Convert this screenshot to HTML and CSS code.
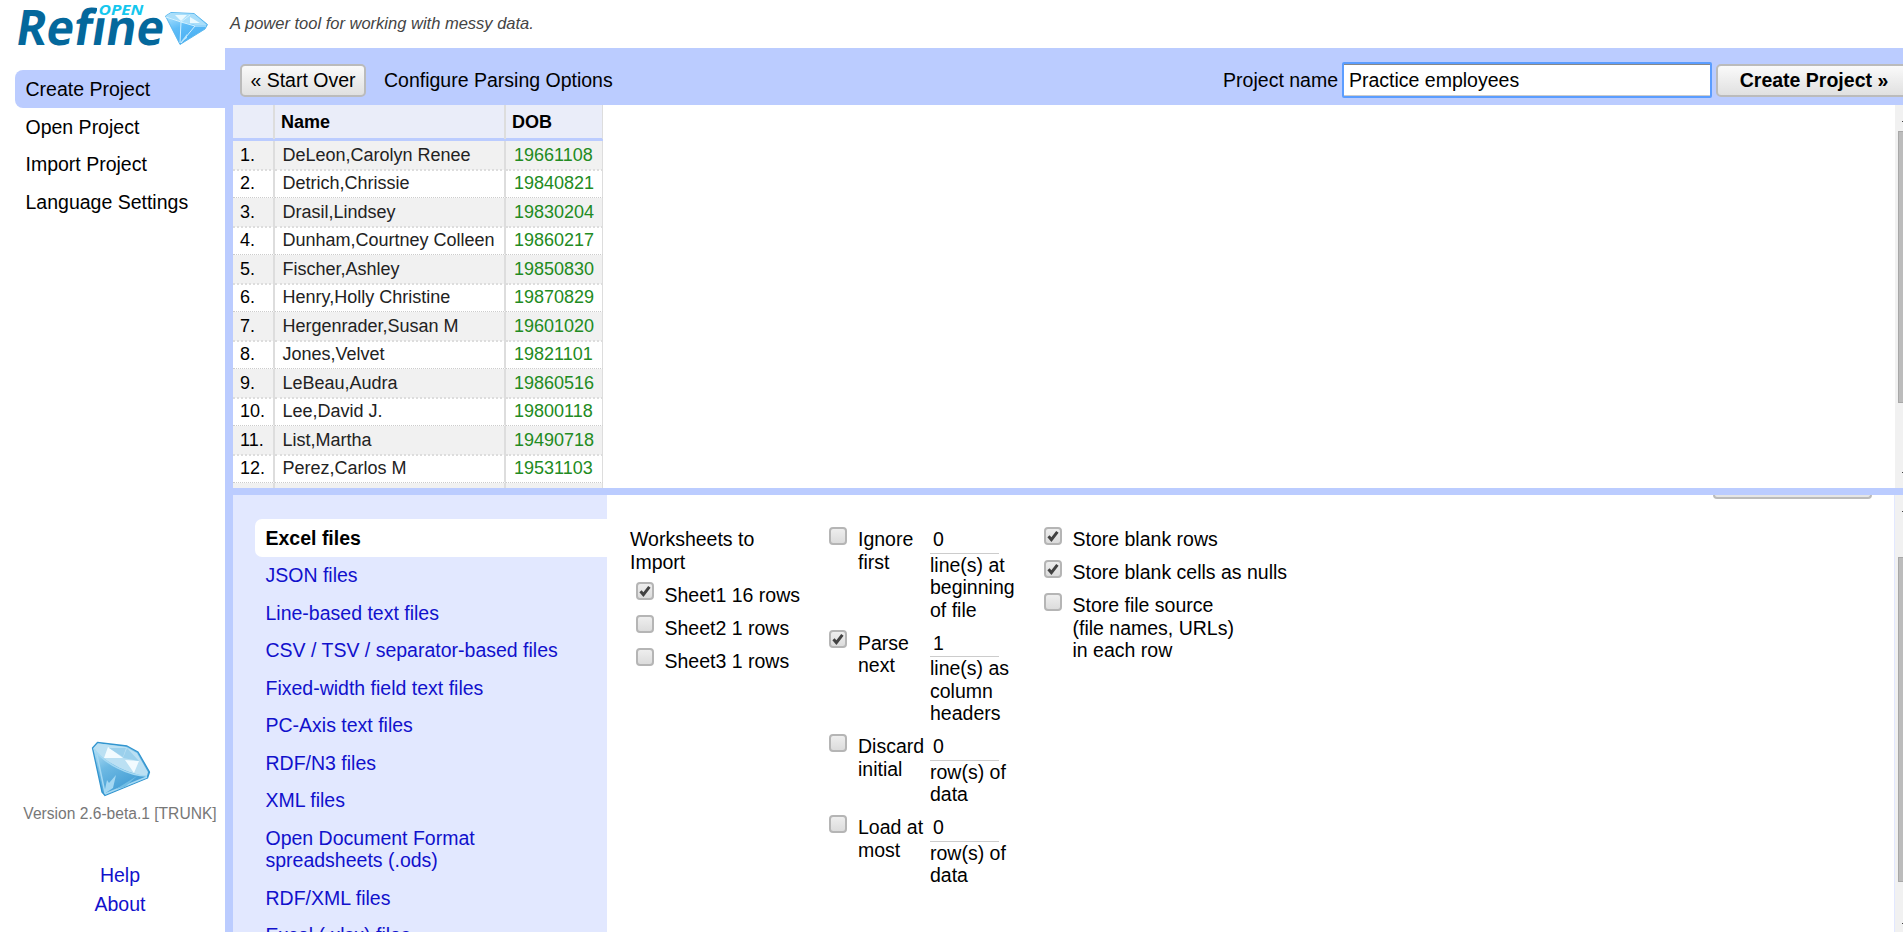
FILE: index.html
```html
<!DOCTYPE html>
<html lang="en">
<head>
<meta charset="utf-8">
<title>OpenRefine</title>
<link rel="stylesheet" href="styles.css">
</head>
<body>
<svg class="defs" width="0" height="0" aria-hidden="true">
  <defs>
    <linearGradient id="gem" x1="0" y1="0" x2="0.6" y2="1">
      <stop offset="0" stop-color="#c9ebfb"/><stop offset="0.45" stop-color="#6db9e3"/><stop offset="1" stop-color="#3b98d2"/>
    </linearGradient>
    <linearGradient id="gem2" x1="0" y1="0" x2="0.5" y2="1">
      <stop offset="0" stop-color="#bfeaff"/><stop offset="0.5" stop-color="#5fbdf8"/><stop offset="1" stop-color="#48aef2"/>
    </linearGradient>
    <symbol id="check" viewBox="0 0 18 18"><path d="M4.5 9.2 7.4 12.6 13.4 4.8" fill="none" stroke="#424242" stroke-width="3"/></symbol>
  </defs>
</svg>
<header class="header">
  <svg class="logo" width="215" height="48" viewBox="0 0 215 48">
    <text class="logo-refine" transform="translate(14 44.500) skewX(-9)" x="0" y="0" textLength="148" lengthAdjust="spacingAndGlyphs">Refine</text>
    <rect x="97" y="2" width="48" height="13" fill="#fff"/>
    <text class="logo-open" x="98.500" y="14.500" textLength="45" lengthAdjust="spacingAndGlyphs">OPEN</text>
    <g stroke-linejoin="round">
      <path d="M165.500 16 171 12.500 194 13.500 207.500 24.500 205 29 180 44.500Z" fill="url(#gem2)" stroke="#5cb8ee" stroke-width="1"/>
      <path d="M166 16 171 13 194 14 207 25 195 25 181 22Z" fill="#a9defa"/>
      <path d="M175 15 187 15 181 21ZM190 17 200 23 190 23Z" fill="#e9f9ff"/>
      <path d="M166 17 181 22 195 26 206 26M181 22 180 43M195 26 181 43M181 22 190 15" fill="none" stroke="#d3f1ff" stroke-width="1"/>
      <path d="M180 43 187 34 187 38Z" fill="#b9e6fd"/>
    </g>
  </svg>
  <p class="tagline">A power tool for working with messy data.</p>
</header>
<div class="body">
  <aside class="sidebar">
    <nav class="nav">
      <a class="nav-item active">Create Project</a>
      <a class="nav-item">Open Project</a>
      <a class="nav-item">Import Project</a>
      <a class="nav-item">Language Settings</a>
    </nav>
    <div class="about">
      <svg class="gem" width="60" height="56" viewBox="0 0 60 56">
        <g stroke-linejoin="round">
          <path d="M1.500 7 6.500 1.500 36 5 47 11 58.500 31 56.500 37 14 54.500 11 51Z" fill="url(#gem)" stroke="#3295cf" stroke-width="1.300"/>
          <path d="M2.500 7.500 7 2.500 35 6 46 12 57 31 56 35C40 34 14 22 2.500 7.500Z" fill="#bbe0f3"/>
          <path d="M17 6 32 17 13 17ZM34 19 48 20 43 32Z" fill="#f2fbff"/>
          <path d="M32 17 36 7 48 20ZM18 7 35 7 32 16Z" fill="#9bd0ec"/>
          <path d="M3 8C14 23 38 35 56 35M6 14 14 52M14 53 56 36" fill="none" stroke="#a5d9f3" stroke-width="1.500"/>
          <path d="M13 53 16 39 18 42 25 34 22 47Z" fill="#a3d7f2"/>
          <path d="M25 48 46 35 34 46Z" fill="#71bde4"/>
        </g>
      </svg>
      <div class="version">Version 2.6-beta.1 [TRUNK]</div>
      <a class="link">Help</a>
      <a class="link">About</a>
    </div>
  </aside>
  <main class="main">
    <div class="toolbar">
      <button class="button">« Start Over</button>
      <span class="toolbar-title">Configure Parsing Options</span>
      <label class="name-label">Project name</label>
      <div class="name-input">Practice employees</div>
      <button class="button primary">Create Project »</button>
    </div>
    <section class="preview">
      <div class="grid">
        <div class="row head"><span></span><span>Name</span><span>DOB</span></div>
        <div class="row"><span>1.</span><span>DeLeon,Carolyn Renee</span><span>19661108</span></div>
        <div class="row"><span>2.</span><span>Detrich,Chrissie</span><span>19840821</span></div>
        <div class="row"><span>3.</span><span>Drasil,Lindsey</span><span>19830204</span></div>
        <div class="row"><span>4.</span><span>Dunham,Courtney Colleen</span><span>19860217</span></div>
        <div class="row"><span>5.</span><span>Fischer,Ashley</span><span>19850830</span></div>
        <div class="row"><span>6.</span><span>Henry,Holly Christine</span><span>19870829</span></div>
        <div class="row"><span>7.</span><span>Hergenrader,Susan M</span><span>19601020</span></div>
        <div class="row"><span>8.</span><span>Jones,Velvet</span><span>19821101</span></div>
        <div class="row"><span>9.</span><span>LeBeau,Audra</span><span>19860516</span></div>
        <div class="row"><span>10.</span><span>Lee,David J.</span><span>19800118</span></div>
        <div class="row"><span>11.</span><span>List,Martha</span><span>19490718</span></div>
        <div class="row"><span>12.</span><span>Perez,Carlos M</span><span>19531103</span></div>
        <div class="row"><span></span><span></span><span></span></div>
      </div>
      <div class="scroll"><i class="tick"></i><i class="thumb"></i><i class="tick"></i></div>
    </section>
    <section class="config">
      <nav class="formats">
        <a class="format selected">Excel files</a>
        <a class="format">JSON files</a>
        <a class="format">Line-based text files</a>
        <a class="format">CSV / TSV / separator-based files</a>
        <a class="format">Fixed-width field text files</a>
        <a class="format">PC-Axis text files</a>
        <a class="format">RDF/N3 files</a>
        <a class="format">XML files</a>
        <a class="format">Open Document Format spreadsheets (.ods)</a>
        <a class="format">RDF/XML files</a>
        <a class="format">Excel (.xlsx) files</a>
      </nav>
      <div class="options">
        <div class="sheets">
          <div class="sheets-title">Worksheets to Import</div>
          <div class="opt"><i class="box"><svg><use href="#check"/></svg></i><span>Sheet1 16 rows</span></div>
          <div class="opt"><i class="box"></i><span>Sheet2 1 rows</span></div>
          <div class="opt"><i class="box"></i><span>Sheet3 1 rows</span></div>
        </div>
        <div class="lines">
          <div class="line"><i class="box"></i><span>Ignore first</span><div><div class="field">0</div>line(s) at beginning of file</div></div>
          <div class="line"><i class="box"><svg><use href="#check"/></svg></i><span>Parse next</span><div><div class="field">1</div>line(s) as column headers</div></div>
          <div class="line"><i class="box"></i><span>Discard initial</span><div><div class="field">0</div>row(s) of data</div></div>
          <div class="line"><i class="box"></i><span>Load at most</span><div><div class="field">0</div>row(s) of data</div></div>
        </div>
        <div class="store">
          <div class="opt"><i class="box"><svg><use href="#check"/></svg></i><span>Store blank rows</span></div>
          <div class="opt"><i class="box"><svg><use href="#check"/></svg></i><span>Store blank cells as nulls</span></div>
          <div class="opt"><i class="box"></i><span>Store file source<br>(file names, URLs)<br>in each row</span></div>
        </div>
        <div class="clipped-button"></div>
      </div>
      <div class="scroll lower"><i class="tick"></i><i class="thumb"></i><i class="tick"></i></div>
    </section>
  </main>
</div>
</body>
</html>
```

FILE: styles.css
```css
* { box-sizing: border-box; }
body {
  margin: 0;
  height: 932px;
  display: flex;
  flex-direction: column;
  overflow: hidden;
  background: #fff;
  color: #000;
  font: 19.5px/22.5px "Liberation Sans", Arial, sans-serif;
}
.defs { position: absolute; }

.header { display: flex; height: 48px; flex: none; }
.logo { flex: none; overflow: visible; }
.logo-refine { font: bold 49px "Open Sans", sans-serif; fill: #04689c; }
.logo-open { font: italic bold 13.5px "Open Sans", sans-serif; fill: #15c7ee; }
.tagline { margin: 12px 0 0 15px; font-size: 16.5px; font-style: italic; color: #444; }

.body { display: flex; flex: 1; min-height: 0; }
.sidebar {
  width: 225px;
  flex: none;
  display: flex;
  flex-direction: column;
  justify-content: space-between;
  padding: 22px 0 10px 15px;
}
.nav { display: flex; flex-direction: column; }
.nav-item { height: 37.5px; padding: 7.5px 10.5px; }
.nav-item:nth-child(even) { padding-top: 8px; }
.nav-item.active { background: #bbccff; border-radius: 8px 0 0 8px; }
.about { display: flex; flex-direction: column; align-items: center; }
.gem { margin-left: 2px; }
.version { margin: 6px 0 39px; font-size: 15.6px; color: #777; white-space: nowrap; }
.link { height: 29px; color: #1111cc; }

.main {
  flex: 1;
  min-width: 0;
  display: flex;
  flex-direction: column;
  padding-left: 8px;
  background: #bbccff;
}
.toolbar { height: 57px; flex: none; display: flex; align-items: center; padding: 8px 0 0 7px; white-space: nowrap; }
.button {
  width: 126px;
  height: 33px;
  flex: none;
  padding: 0;
  border: 2px solid #bbb;
  border-radius: 5px;
  background: linear-gradient(#fafafa, #e0e0e0);
  font: inherit;
  color: #000;
}
.button.primary { width: 196px; margin: 0 -9px 0 4px; font-weight: bold; }
.toolbar-title { margin: 0 auto 0 18px; }
.name-label { margin-right: 4px; }
.name-input {
  width: 370px;
  height: 36px;
  flex: none;
  margin-top: -1px;
  padding: 5px 5px;
  background: #fff;
  border: 2px solid #5b9dff;
  border-radius: 2px;
  box-shadow: inset 0 1px #888, inset 0 -1px #ccc;
}

.preview { height: 383px; flex: none; display: flex; justify-content: space-between; overflow: hidden; background: #fff; }
.grid { width: 370px; font-size: 18px; line-height: 28px; }
.row { height: 28.5px; display: grid; grid-template-columns: 42px 231px 97px; color: #222; }
.row span { padding-left: 7.5px; border-right: 2px solid #ddd; border-bottom: 1px dotted #ccc; white-space: nowrap; }
.row:nth-child(odd) span { line-height: 27px; }
.row span:first-child { color: #000; padding-left: 7px; }
.row span:last-child { color: #228b22; border-right-width: 1px; padding-left: 8px; }
.row:nth-child(even) { background: #f1f1f1; }
.row:nth-child(even) span { border-bottom-width: 2px; border-bottom-color: #ddd; }
.row.head { height: 36px; background: #eaedf9; border-bottom: 3px solid #bbccff; font-weight: bold; }
.row.head span:nth-child(n) { color: #000; border-bottom: 0; padding-left: 6px; line-height: 34px; }

.scroll { width: 8px; flex: none; display: flex; flex-direction: column; align-items: flex-end; background: #f1f1f1; padding: 16px 0 15px; }
.tick { width: 1px; height: 1px; background: #444; }
.thumb { width: 5px; height: 272px; margin: 9px 0 auto; background: #bcbcbc; border: 1px solid #a8a8a8; border-right: 0; }
.scroll.lower { padding: 16px 0 8px; box-shadow: -1px 0 #e2e8ff; }
.scroll.lower .thumb { height: 325px; margin-top: 45px; }

.config { flex: 1; min-height: 0; margin-top: 7px; display: flex; overflow: hidden; background: #fff; }
.formats { width: 374px; flex: none; padding: 24px 0 0 22px; background: #e2e8ff; }
.format { display: block; padding: 7.5px 100px 7.5px 10.5px; color: #1111cc; }
.format:nth-child(4) { padding-right: 0; }
.format.selected { height: 37.5px; background: #fff; border-radius: 7px 0 0 7px; color: #000; font-weight: bold; }

.options { position: relative; flex: 1; min-width: 0; display: flex; align-items: flex-start; padding: 33px 0 0 23px; }
.sheets { width: 199px; }
.sheets-title { width: 140px; margin-bottom: 10.5px; }
.sheets .opt { padding-left: 6px; }
.opt { display: flex; gap: 10.5px; margin-bottom: 10.5px; }
.box {
  width: 18px;
  height: 18px;
  flex: none;
  display: block;
  margin-top: -1.5px;
  border: 2px solid #b5b5b5;
  border-radius: 4px;
  background: linear-gradient(#eee, #dcdcdc);
}
.box svg { display: block; width: 18px; height: 18px; margin: -2px; }
.lines { width: 215px; }
.line { display: grid; grid-template-columns: 18px 72px 85px; column-gap: 11px; margin-bottom: 10.5px; }
.line > :nth-child(3) { margin-left: -11px; }
.field { width: 69px; height: 25.5px; padding-left: 3px; border-bottom: 1px solid #ccc; }
.clipped-button {
  position: absolute;
  left: 1106px;
  top: 0;
  width: 159px;
  height: 4px;
  border: solid #bbb;
  border-width: 0 2px 2px;
  border-radius: 0 0 6px 6px;
  background: #e5e5e5;
}
```
